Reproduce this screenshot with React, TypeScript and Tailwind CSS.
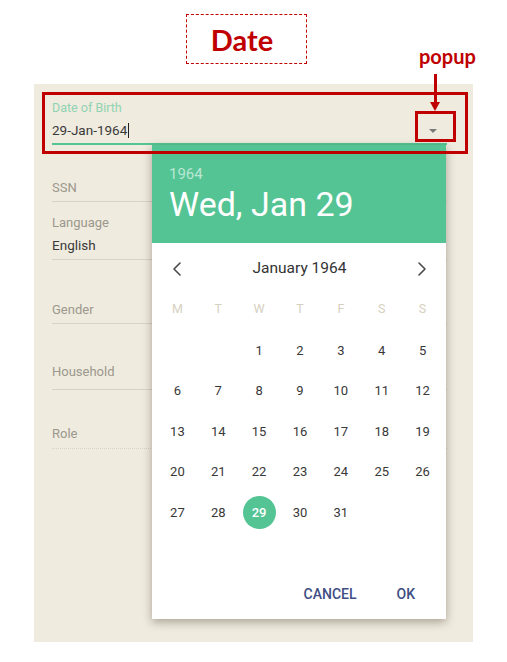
import { ChevronLeft, ChevronRight } from 'lucide-react'

const GREEN = 'bg-[#54c494]'

const weekDays = ['M', 'T', 'W', 'T', 'F', 'S', 'S']

// January 1964 starts on a Wednesday (Monday-first grid)
const cells: (number | null)[] = [null, null, ...Array.from({ length: 31 }, (_, i) => i + 1)]

function Field({
  label,
  value,
  className,
  pb,
  dotted,
}: {
  label: string
  value?: string
  className: string
  pb: string
  dotted?: boolean
}) {
  return (
    <div
      className={`${className} ${pb} w-[395px] border-b border-[#d8d3c5] ${dotted ? 'border-dotted' : ''}`}
    >
      <div className="text-[13px] leading-[14px] text-[#9c988d]">{label}</div>
      {value && (
        <div className="mt-[5px] text-[13.5px] leading-[20px] text-[#3a3a3a]">{value}</div>
      )}
    </div>
  )
}

function DatePopup() {
  return (
    <div className="absolute left-[118px] top-[61px] flex h-[474px] w-[294px] flex-col bg-white shadow-[0_3px_9px_rgba(60,50,30,0.4)]">
      <div className={`${GREEN} h-[98px] pl-[17px] pt-[19px]`}>
        <div className="text-[15px] leading-[20px] text-white/60">1964</div>
        <div className="text-[34px] leading-[40px] text-white">Wed, Jan 29</div>
      </div>

      <div className="mt-[6px] flex h-[40px] items-center justify-between pl-[13px] pr-[12px] text-[#4a4a4a]">
        <ChevronLeft size={24} strokeWidth={1.6} />
        <span className="text-[15.5px] text-[#333]">January 1964</span>
        <ChevronRight size={24} strokeWidth={1.6} />
      </div>

      <div className="ml-[5px] grid w-[286px] grid-cols-7">
        {weekDays.map((d, i) => (
          <div
            key={i}
            className="flex h-[40px] items-center justify-center text-[12.5px] text-[#d6d0c0]"
          >
            {d}
          </div>
        ))}
      </div>

      <div className="ml-[5px] mt-[1px] grid w-[286px] grid-cols-7">
        {cells.map((n, i) => (
          <div key={i} className="flex h-[40.5px] items-center justify-center">
            {n === 29 ? (
              <span className={`${GREEN} flex h-[33px] w-[33px] items-center justify-center rounded-full text-[13px] font-medium text-white`}>
                29
              </span>
            ) : (
              <span className="text-[13px] text-[#383838]">{n ?? ''}</span>
            )}
          </div>
        ))}
      </div>

      <div className="mt-auto mb-[7px] flex h-[36px] items-center justify-end gap-[40px] pr-[31px] text-[14px] font-medium text-[#3e4d84]">
        <span>CANCEL</span>
        <span>OK</span>
      </div>
    </div>
  )
}

export default function App() {
  return (
    <div className="relative h-[662px] w-[507px] overflow-hidden bg-white font-['Roboto',sans-serif]">
      {/* title */}
      <div className="ml-[186px] mt-[14px] flex h-[50px] w-[121px] items-center justify-center border border-dashed border-[#c00000] pr-[9px]">
        <span className="pt-[1px] font-['Lato',sans-serif] text-[29px] font-bold text-[#c00000]">Date</span>
      </div>

      {/* form panel */}
      <div className="relative ml-[34px] mt-[20px] h-[558px] w-[439px] bg-[#efebdf] pl-[18px] pt-[17px]">
        <div className="relative w-[395px] border-b-2 border-[#54c494] pb-[3px]">
          <div className="text-[12.5px] leading-[14px] text-[#8fd3b2]">Date of Birth</div>
          <div className="mt-[5px] flex items-center text-[13.5px] leading-[20px] text-[#3a3a3a]">
            29-Jan-1964
            <span className="ml-[1px] h-[15px] w-px bg-[#222]" />
          </div>
          <span className="absolute right-[10px] top-[28px] h-0 w-0 border-x-[4px] border-t-[4px] border-x-transparent border-t-[#7a7a7a]" />
        </div>

        <Field label="SSN" className="mt-[36px]" pb="pb-[6px]" />
        <Field label="Language" value="English" className="mt-[14px]" pb="pb-[4px]" />
        <Field label="Gender" className="mt-[43px]" pb="pb-[6px]" />
        <Field label="Household" className="mt-[41px]" pb="pb-[10px]" />
        <Field label="Role" className="mt-[37px]" pb="pb-[7px]" dotted />

        <DatePopup />
      </div>

      {/* annotations */}
      <div className="absolute left-[42px] top-[92px] h-[62px] w-[426px] border-[3px] border-[#c00000]" />
      <div className="absolute left-[415px] top-[111px] h-[31px] w-[41px] border-[3px] border-[#c00000]" />
      <span className="absolute left-[419px] top-[44px] font-['Lato',sans-serif] text-[20px] font-bold leading-[24px] text-[#c00000]">
        popup
      </span>
      <div className="absolute left-[434px] top-[74px] h-[29px] w-[3px] bg-[#c00000]" />
      <div className="absolute left-[430px] top-[102px] h-0 w-0 border-x-[5.5px] border-t-[9px] border-x-transparent border-t-[#c00000]" />
    </div>
  )
}
